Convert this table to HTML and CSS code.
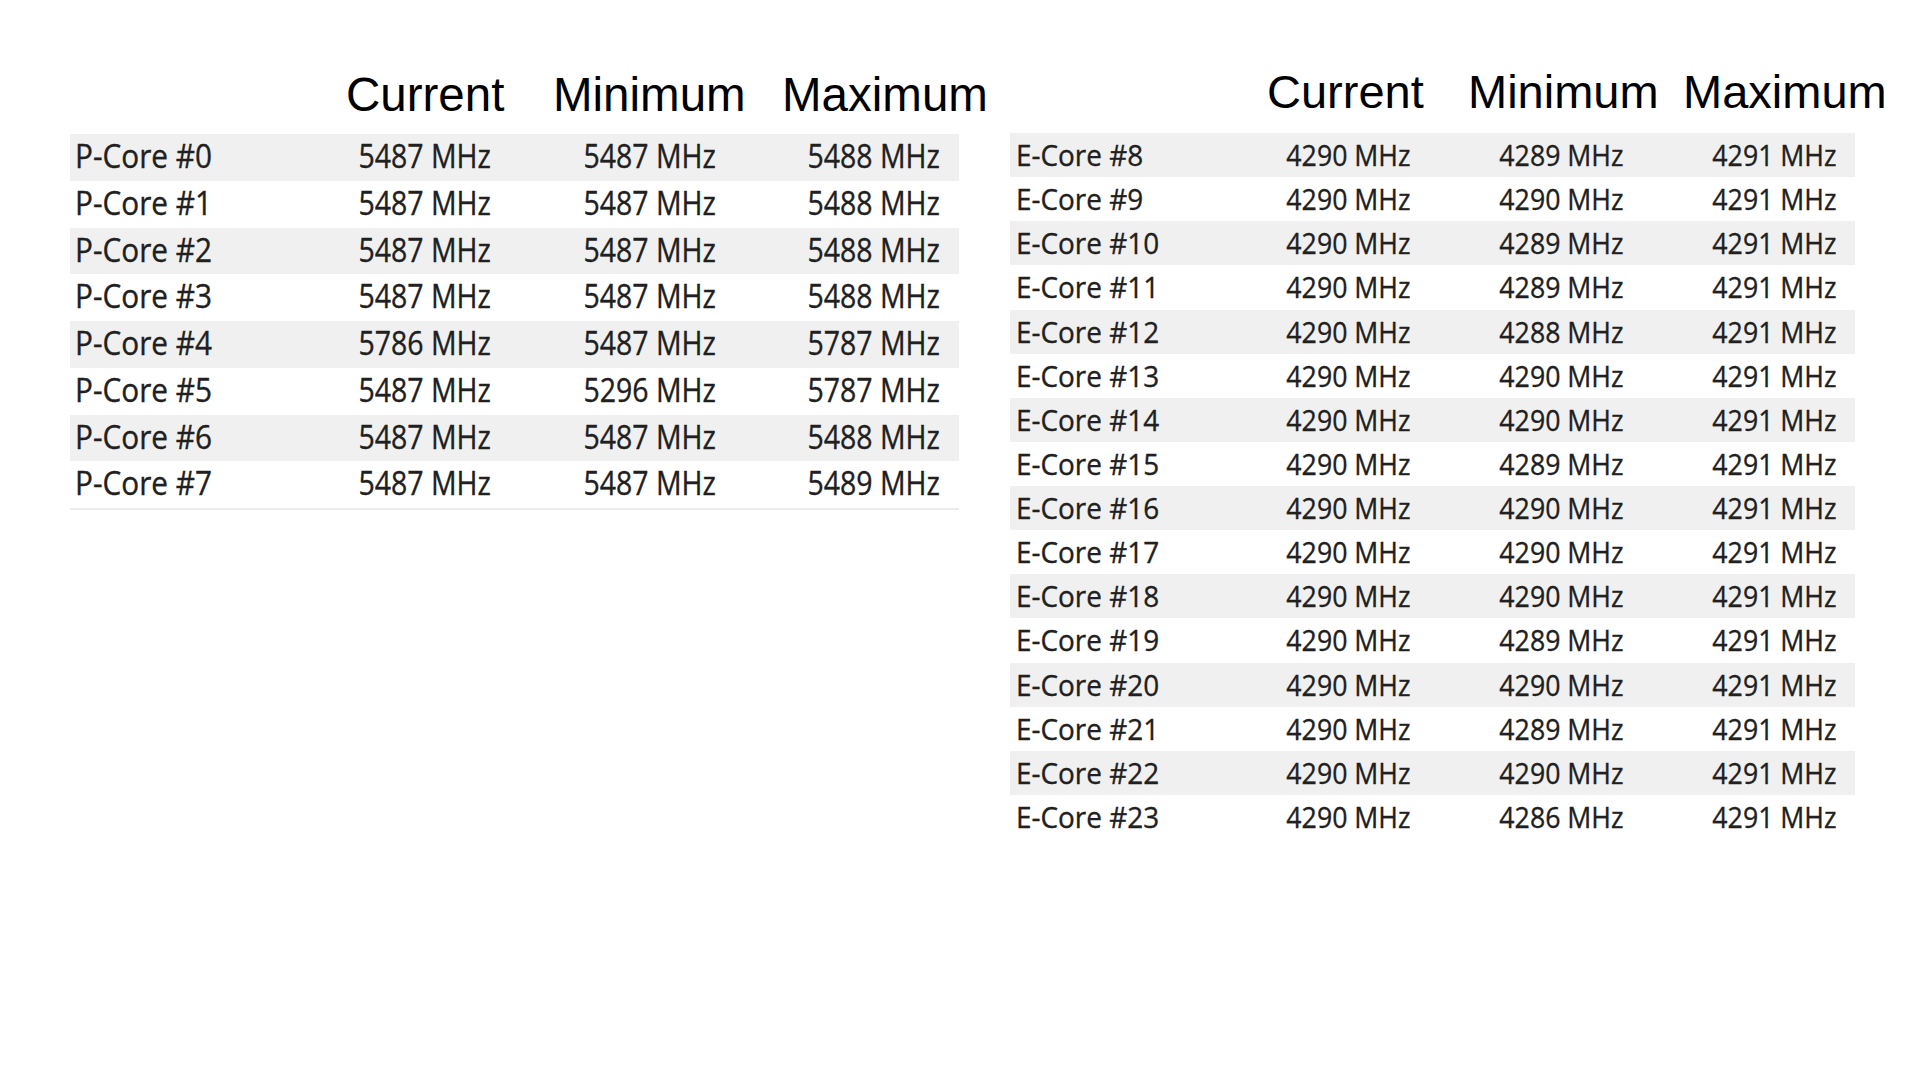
FILE: index.html
```html
<!DOCTYPE html>
<html lang="en">
<head>
<meta charset="utf-8">
<title>Core clocks</title>
<link rel="stylesheet" href="styles.css">
</head>
<body>
<main class="page">
  <section class="panel panel-p">
    <div class="heads">
      <span class="h h-cur">Current</span>
      <span class="h h-min">Minimum</span>
      <span class="h h-max">Maximum</span>
    </div>
    <div class="tbl">
      <div class="row"><span class="name"><i>P-Core #0</i></span><span class="val"><i>5487 MHz</i></span><span class="val"><i>5487 MHz</i></span><span class="val"><i>5488 MHz</i></span></div>
      <div class="row"><span class="name"><i>P-Core #1</i></span><span class="val"><i>5487 MHz</i></span><span class="val"><i>5487 MHz</i></span><span class="val"><i>5488 MHz</i></span></div>
      <div class="row"><span class="name"><i>P-Core #2</i></span><span class="val"><i>5487 MHz</i></span><span class="val"><i>5487 MHz</i></span><span class="val"><i>5488 MHz</i></span></div>
      <div class="row"><span class="name"><i>P-Core #3</i></span><span class="val"><i>5487 MHz</i></span><span class="val"><i>5487 MHz</i></span><span class="val"><i>5488 MHz</i></span></div>
      <div class="row"><span class="name"><i>P-Core #4</i></span><span class="val"><i>5786 MHz</i></span><span class="val"><i>5487 MHz</i></span><span class="val"><i>5787 MHz</i></span></div>
      <div class="row"><span class="name"><i>P-Core #5</i></span><span class="val"><i>5487 MHz</i></span><span class="val"><i>5296 MHz</i></span><span class="val"><i>5787 MHz</i></span></div>
      <div class="row"><span class="name"><i>P-Core #6</i></span><span class="val"><i>5487 MHz</i></span><span class="val"><i>5487 MHz</i></span><span class="val"><i>5488 MHz</i></span></div>
      <div class="row"><span class="name"><i>P-Core #7</i></span><span class="val"><i>5487 MHz</i></span><span class="val"><i>5487 MHz</i></span><span class="val"><i>5489 MHz</i></span></div>
    </div>
  </section>
  <section class="panel panel-e">
    <div class="heads">
      <span class="h h-cur">Current</span>
      <span class="h h-min">Minimum</span>
      <span class="h h-max">Maximum</span>
    </div>
    <div class="tbl">
      <div class="row"><span class="name"><i>E-Core #8</i></span><span class="val"><i>4290 MHz</i></span><span class="val"><i>4289 MHz</i></span><span class="val"><i>4291 MHz</i></span></div>
      <div class="row"><span class="name"><i>E-Core #9</i></span><span class="val"><i>4290 MHz</i></span><span class="val"><i>4290 MHz</i></span><span class="val"><i>4291 MHz</i></span></div>
      <div class="row"><span class="name"><i>E-Core #10</i></span><span class="val"><i>4290 MHz</i></span><span class="val"><i>4289 MHz</i></span><span class="val"><i>4291 MHz</i></span></div>
      <div class="row"><span class="name"><i>E-Core #11</i></span><span class="val"><i>4290 MHz</i></span><span class="val"><i>4289 MHz</i></span><span class="val"><i>4291 MHz</i></span></div>
      <div class="row"><span class="name"><i>E-Core #12</i></span><span class="val"><i>4290 MHz</i></span><span class="val"><i>4288 MHz</i></span><span class="val"><i>4291 MHz</i></span></div>
      <div class="row"><span class="name"><i>E-Core #13</i></span><span class="val"><i>4290 MHz</i></span><span class="val"><i>4290 MHz</i></span><span class="val"><i>4291 MHz</i></span></div>
      <div class="row"><span class="name"><i>E-Core #14</i></span><span class="val"><i>4290 MHz</i></span><span class="val"><i>4290 MHz</i></span><span class="val"><i>4291 MHz</i></span></div>
      <div class="row"><span class="name"><i>E-Core #15</i></span><span class="val"><i>4290 MHz</i></span><span class="val"><i>4289 MHz</i></span><span class="val"><i>4291 MHz</i></span></div>
      <div class="row"><span class="name"><i>E-Core #16</i></span><span class="val"><i>4290 MHz</i></span><span class="val"><i>4290 MHz</i></span><span class="val"><i>4291 MHz</i></span></div>
      <div class="row"><span class="name"><i>E-Core #17</i></span><span class="val"><i>4290 MHz</i></span><span class="val"><i>4290 MHz</i></span><span class="val"><i>4291 MHz</i></span></div>
      <div class="row"><span class="name"><i>E-Core #18</i></span><span class="val"><i>4290 MHz</i></span><span class="val"><i>4290 MHz</i></span><span class="val"><i>4291 MHz</i></span></div>
      <div class="row"><span class="name"><i>E-Core #19</i></span><span class="val"><i>4290 MHz</i></span><span class="val"><i>4289 MHz</i></span><span class="val"><i>4291 MHz</i></span></div>
      <div class="row"><span class="name"><i>E-Core #20</i></span><span class="val"><i>4290 MHz</i></span><span class="val"><i>4290 MHz</i></span><span class="val"><i>4291 MHz</i></span></div>
      <div class="row"><span class="name"><i>E-Core #21</i></span><span class="val"><i>4290 MHz</i></span><span class="val"><i>4289 MHz</i></span><span class="val"><i>4291 MHz</i></span></div>
      <div class="row"><span class="name"><i>E-Core #22</i></span><span class="val"><i>4290 MHz</i></span><span class="val"><i>4290 MHz</i></span><span class="val"><i>4291 MHz</i></span></div>
      <div class="row"><span class="name"><i>E-Core #23</i></span><span class="val"><i>4290 MHz</i></span><span class="val"><i>4286 MHz</i></span><span class="val"><i>4291 MHz</i></span></div>
    </div>
  </section>
</main>
</body>
</html>
```
FILE: styles.css
```css
html, body {
  margin: 0;
  padding: 0;
  background: #ffffff;
}

.page {
  display: flex;
  align-items: flex-start;
  gap: 51px;
  padding-left: 70px;
  width: 1920px;
  height: 1080px;
  box-sizing: border-box;
}

.panel {
  display: flex;
  flex-direction: column;
}

.heads {
  display: flex;
  font-family: "Liberation Sans", Arial, sans-serif;
  color: #000;
  line-height: 1;
  white-space: nowrap;
}

.h {
  display: block;
}

/* P-core panel */
.panel-p {
  width: 889px;
  padding-top: 71px;
}
.panel-p .heads {
  font-size: 47.5px;
  height: 47.5px;
  margin-bottom: 15.5px;
}
.panel-p .h-cur { margin-left: 276px; }
.panel-p .h-min { margin-left: 48.6px; }
.panel-p .h-max { margin-left: 36.4px; }

.panel-p .tbl {
  border-bottom: 2px solid #ececec;
}
.panel-p .row {
  height: 46.75px;
  line-height: 43px;
  font-size: 32px;
  grid-template-columns: 192px repeat(3, 224.33px);
  padding: 0 19px 0 5px;
}

/* E-core panel */
.panel-e {
  width: 845px;
  padding-top: 68px;
}
.panel-e .heads {
  font-size: 47px;
  height: 47px;
  margin-bottom: 18px;
}
.panel-e .h-cur { margin-left: 257px; }
.panel-e .h-min { margin-left: 44.3px; }
.panel-e .h-max { margin-left: 24.4px; }

.panel-e .row {
  height: 44.13px;
  line-height: 43px;
  font-size: 30px;
  grid-template-columns: 181px repeat(3, 213.33px);
  padding: 0 18px 0 6px;
}

/* rows */
.row {
  display: grid;
  box-sizing: border-box;
  font-family: "Open Sans", "Noto Sans", sans-serif;
  color: #202020;
  -webkit-text-stroke: 0.35px #202020;
  white-space: nowrap;
  overflow: hidden;
}
.row:nth-child(odd) {
  background: #f0f0f0;
}

.row i {
  font-style: normal;
  display: inline-block;
}

.name {
  text-align: left;
}
.name i {
  transform: scaleX(0.93);
  transform-origin: 0 50%;
}

.val {
  text-align: right;
}
.val i {
  transform: scaleX(0.89);
  transform-origin: 100% 50%;
}
```
